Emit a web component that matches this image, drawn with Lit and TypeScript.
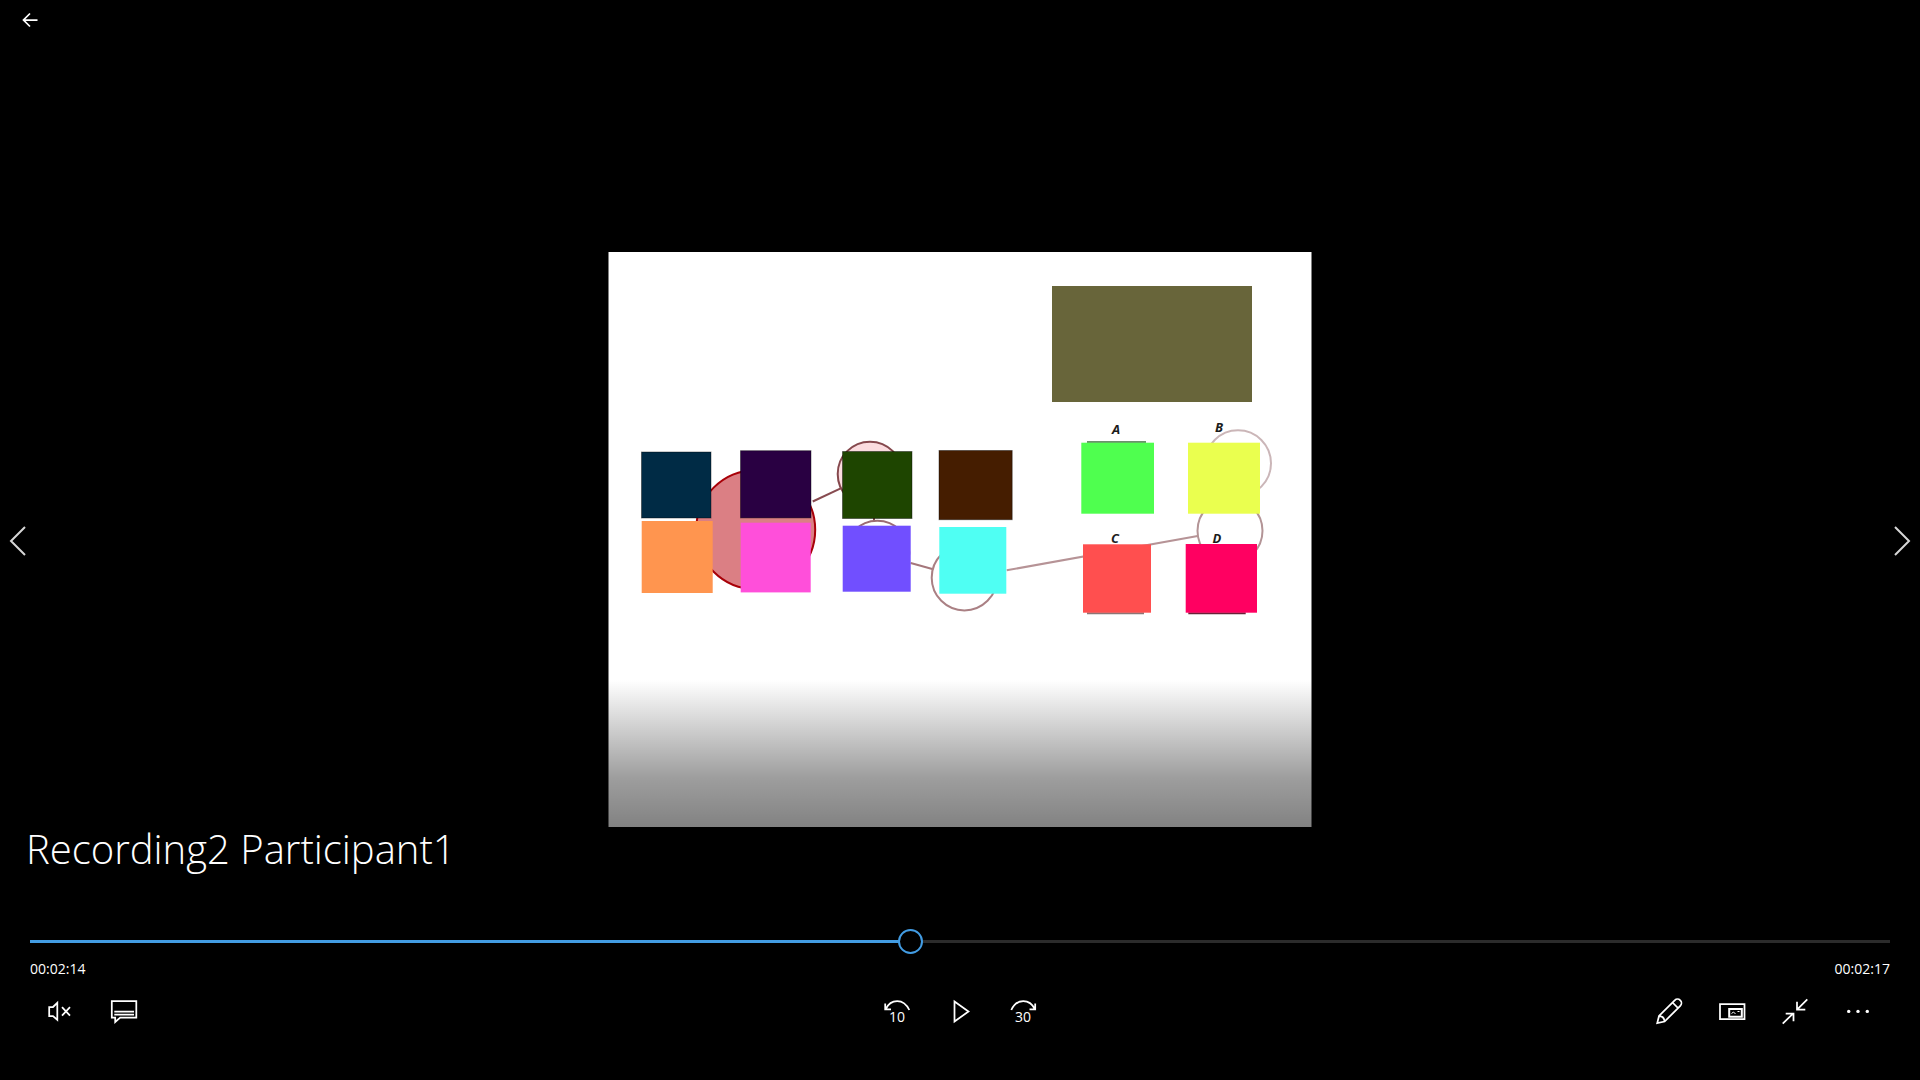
import { LitElement, html, svg, css } from "lit";
import { customElement, state } from "lit/decorators.js";

interface Swatch {
  x: number;
  y: number;
  w: number;
  h: number;
  fill: string;
  edge?: boolean;
}

const SWATCHES: Swatch[] = [
  { x: 33.5, y: 200, w: 70, h: 66.5, fill: "#002b45", edge: true },
  { x: 132.5, y: 198.7, w: 71, h: 67.7, fill: "#290042", edge: true },
  { x: 234.5, y: 199.5, w: 70, h: 67.5, fill: "#1e4500", edge: true },
  { x: 331, y: 198.5, w: 73.7, h: 69.7, fill: "#451d00", edge: true },
  { x: 33.7, y: 269, w: 71, h: 72, fill: "#ff954f" },
  { x: 132.7, y: 270.7, w: 70, h: 69.7, fill: "#ff4fda" },
  { x: 234.7, y: 273.7, w: 68, h: 66, fill: "#714fff" },
  { x: 331.3, y: 275, w: 67, h: 66.7, fill: "#4ffff3" },
  { x: 473.3, y: 190.7, w: 72.7, h: 71, fill: "#4fff4f" },
  { x: 580, y: 190.7, w: 72, h: 71, fill: "#eaff4f" },
  { x: 475, y: 292.3, w: 68, h: 68.4, fill: "#ff4f4f" },
  { x: 577.7, y: 292, w: 71.3, h: 68.7, fill: "#ff0061" },
];

@customElement("recorded-frame")
export class RecordedFrame extends LitElement {
  static styles = css`
    :host {
      display: block;
    }
    .frame {
      display: block;
      width: 704px;
      max-width: 100%;
      height: auto;
    }
    .mark {
      font: italic 700 13px "Open Sans", sans-serif;
      fill: #1c1c1c;
      text-anchor: middle;
    }
  `;

  render() {
    return html`
      <svg class="frame" viewBox="0 0 704 576" role="img" aria-label="Recording">
        <rect x="0.5" width="703" height="575" fill="#fff" />
        <g fill="none" stroke-width="2">
          <circle cx="147.7" cy="277.7" r="59.5" fill="#db7f84" stroke="#a80008" />
          <path d="M204.7 249.5 232.7 236.3" stroke="#874b50" />
          <circle cx="262" cy="222" r="32.3" fill="#fbdcdf" stroke="#85484d" />
          <path d="M266 266v4" stroke="#85484d" />
          <circle cx="269.3" cy="300.7" r="32" stroke="#9c6c72" />
          <path d="M302.7 311 324.3 317" stroke="#a5777b" />
          <circle cx="356.4" cy="325.7" r="32.7" stroke="#aa8084" />
          <path d="M398.7 318.3 589.7 284" stroke="#b69396" />
          <circle cx="622" cy="278.7" r="32.5" stroke="#b39496" />
          <circle cx="630" cy="211.3" r="33" stroke="#cbb6b8" />
        </g>
        <path d="M479 190h59" stroke="#3c6b3c" stroke-width="1.5" />
        <path d="M479 361.3h57" stroke="#8d7474" stroke-width="2" />
        <path d="M580.3 361.3h57.4" stroke="#6a2038" stroke-width="2" />
        <rect x="444" y="34" width="200" height="116" fill="#68653a" />
        ${SWATCHES.map((s) =>
          s.edge
            ? svg`<rect x=${s.x} y=${s.y} width=${s.w - 0.5} height=${s.h - 0.5} fill=${s.fill}
                stroke="#000" stroke-opacity="0.4" />`
            : svg`<rect x=${s.x} y=${s.y} width=${s.w} height=${s.h} fill=${s.fill} />`
        )}
        <text class="mark" x="508" y="182">A</text>
        <text class="mark" x="611" y="180">B</text>
        <text class="mark" x="507" y="291">C</text>
        <text class="mark" x="609" y="291">D</text>
      </svg>
    `;
  }
}

const icon = (body: unknown) => html`
  <svg class="icon" viewBox="0 0 27 27" aria-hidden="true">${body}</svg>
`;

const ICONS = {
  mute: svg`<path d="M1.2 9H5l4.3-4.2v17L5 18H1.2zM14 9.2l8 8.4M22 9.2l-8 8.4" />`,
  captions: svg`<path d="M.8 3h24.5v16.7H9.2L4.2 24v-4.3H.8zM3.3 13.5H23M3.3 16.5H23" />`,
  back10: svg`<path d="M25.3 12C22.5 6 18 3 13.2 3 8 3 4 6.2 1.7 11M1.2 5.5v5.9H7" />
    <text x="13" y="24">10</text>`,
  play: svg`<path d="M7.5 3.5 21.5 13.5 7.5 23.5z" />`,
  forward30: svg`<path d="M1.3 12C4 6 8.5 3 13.3 3c5.2 0 9.2 3.2 11.5 8M25.2 5.5v5.9H19.5" />
    <text x="13" y="24">30</text>`,
  edit: svg`<path d="M1.2 25.2 3 18 18.7 2.3a3.9 3.9 0 0 1 5.6 5.6L8.6 23.5zM16.5 4.5l5.6 5.6M3 18c3.2 0 5.4 2.2 5.6 5.5" />`,
  mini: svg`<path d="M1 6h24.5v15H1z" /><path d="M10.2 11h12.6v7.7H10.2z" stroke-width="2" />
    <path d="M12.5 15.5l2-1.5 2 2M18.5 13.5h2" stroke-width="1" />`,
  shrink: svg`<path d="M25.3 1.3 15.3 11.3M15 3.7v7.8h8.3M.7 25.7l10.6-10.4M3.7 15.5h7.8v7.8" />`,
  more: svg`<g class="dots"><circle cx="3.7" cy="13.4" r="1.7" /><circle cx="13" cy="13.4" r="1.7" /><circle cx="22.3" cy="13.4" r="1.7" /></g>`,
};

@customElement("app-root")
export class AppRoot extends LitElement {
  static styles = css`
    :host {
      display: block;
      font-family: "Segoe UI", "Open Sans", sans-serif;
      color: #fff;
      background: #000;
    }
    .player {
      display: grid;
      grid-template-columns: minmax(0, 1fr);
      min-height: 100vh;
    }
    .stage,
    .chrome {
      grid-area: 1 / 1;
    }
    .stage {
      display: grid;
      grid-template-columns: auto minmax(0, 1fr) auto;
      align-items: center;
    }
    .picture {
      justify-self: center;
    }
    .chrome {
      display: flex;
      flex-direction: column;
      justify-content: space-between;
      pointer-events: none;
    }
    button {
      display: flex;
      align-items: center;
      justify-content: center;
      margin: 0;
      padding: 0;
      border: 0;
      background: none;
      color: inherit;
      font: inherit;
      pointer-events: auto;
    }
    svg {
      display: block;
      fill: none;
      stroke: currentColor;
      stroke-width: 1.75;
    }
    .turn {
      width: 36px;
      height: 80px;
      color: #d6d6d6;
    }
    .chevron {
      width: 18px;
      height: 32px;
      stroke-width: 2;
    }
    .back {
      width: 60px;
      height: 40px;
    }
    .arrow {
      width: 16px;
      height: 16px;
    }
    .panel {
      padding: 138px 30px 44px;
      background: linear-gradient(
        to bottom,
        rgba(0, 0, 0, 0),
        rgba(0, 0, 0, 0.38) 97px,
        rgba(0, 0, 0, 0.49) 147px
      );
    }
    .title {
      margin: 0 0 49px -4px;
      font-size: 40px;
      line-height: 62px;
      font-weight: 300;
    }
    .seek {
      display: block;
      appearance: none;
      width: 100%;
      height: 25px;
      margin: 0;
      background: none;
      pointer-events: auto;
    }
    .seek::-webkit-slider-runnable-track {
      height: 3px;
      background: linear-gradient(to right, #429ce3 var(--played), #2b2b2b var(--played));
    }
    .seek::-webkit-slider-thumb {
      appearance: none;
      box-sizing: border-box;
      width: 25px;
      height: 25px;
      margin-top: -11px;
      border: 2px solid #429ce3;
      border-radius: 50%;
      background: #000;
    }
    .times {
      display: flex;
      justify-content: space-between;
      margin: 4px 0 8px;
      font-size: 14px;
      line-height: 21px;
    }
    .bar {
      display: grid;
      grid-template-columns: 1fr auto 1fr;
    }
    .group {
      display: flex;
    }
    .middle {
      padding-left: 1px;
    }
    .end {
      justify-content: flex-end;
    }
    .tool {
      width: 63px;
      height: 49px;
    }
    .icon {
      width: 27px;
      height: 27px;
      overflow: visible;
    }
    .icon text {
      font-size: 14px;
      text-anchor: middle;
      fill: currentColor;
      stroke: none;
    }
    .dots {
      fill: currentColor;
      stroke: none;
    }
  `;

  @state() private position = 473;

  private onSeek(e: Event) {
    this.position = Number((e.target as HTMLInputElement).value);
  }

  private tool(label: string, body: unknown) {
    return html`<button class="tool" type="button" aria-label=${label}>${icon(body)}</button>`;
  }

  render() {
    return html`
      <main class="player">
        <div class="stage">
          <button class="turn" type="button" aria-label="Previous">
            <svg class="chevron" viewBox="0 0 18 32"><path d="M16 3 2 17 16 31" /></svg>
          </button>
          <recorded-frame class="picture"></recorded-frame>
          <button class="turn" type="button" aria-label="Next">
            <svg class="chevron" viewBox="0 0 18 32"><path d="M2 3 16 17 2 31" /></svg>
          </button>
        </div>
        <div class="chrome">
          <header>
            <button class="back" type="button" aria-label="Back">
              <svg class="arrow" viewBox="0 0 16 16"><path d="M8 1.5 1.5 8 8 14.5M1.5 8H15.5" /></svg>
            </button>
          </header>
          <footer class="panel">
            <h1 class="title">Recording2 Participant1</h1>
            <input
              class="seek"
              type="range"
              aria-label="Seek"
              min="0"
              max="1000"
              .value=${String(this.position)}
              style="--played: ${this.position / 10}%"
              @input=${this.onSeek}
            />
            <div class="times"><span>00:02:14</span><span>00:02:17</span></div>
            <div class="bar">
              <div class="group">
                ${this.tool("Unmute", ICONS.mute)} ${this.tool("Captions", ICONS.captions)}
              </div>
              <div class="group middle">
                ${this.tool("Skip back 10 seconds", ICONS.back10)} ${this.tool("Play", ICONS.play)}
                ${this.tool("Skip forward 30 seconds", ICONS.forward30)}
              </div>
              <div class="group end">
                ${this.tool("Edit", ICONS.edit)} ${this.tool("Mini view", ICONS.mini)}
                ${this.tool("Exit full screen", ICONS.shrink)} ${this.tool("More", ICONS.more)}
              </div>
            </div>
          </footer>
        </div>
      </main>
    `;
  }
}
